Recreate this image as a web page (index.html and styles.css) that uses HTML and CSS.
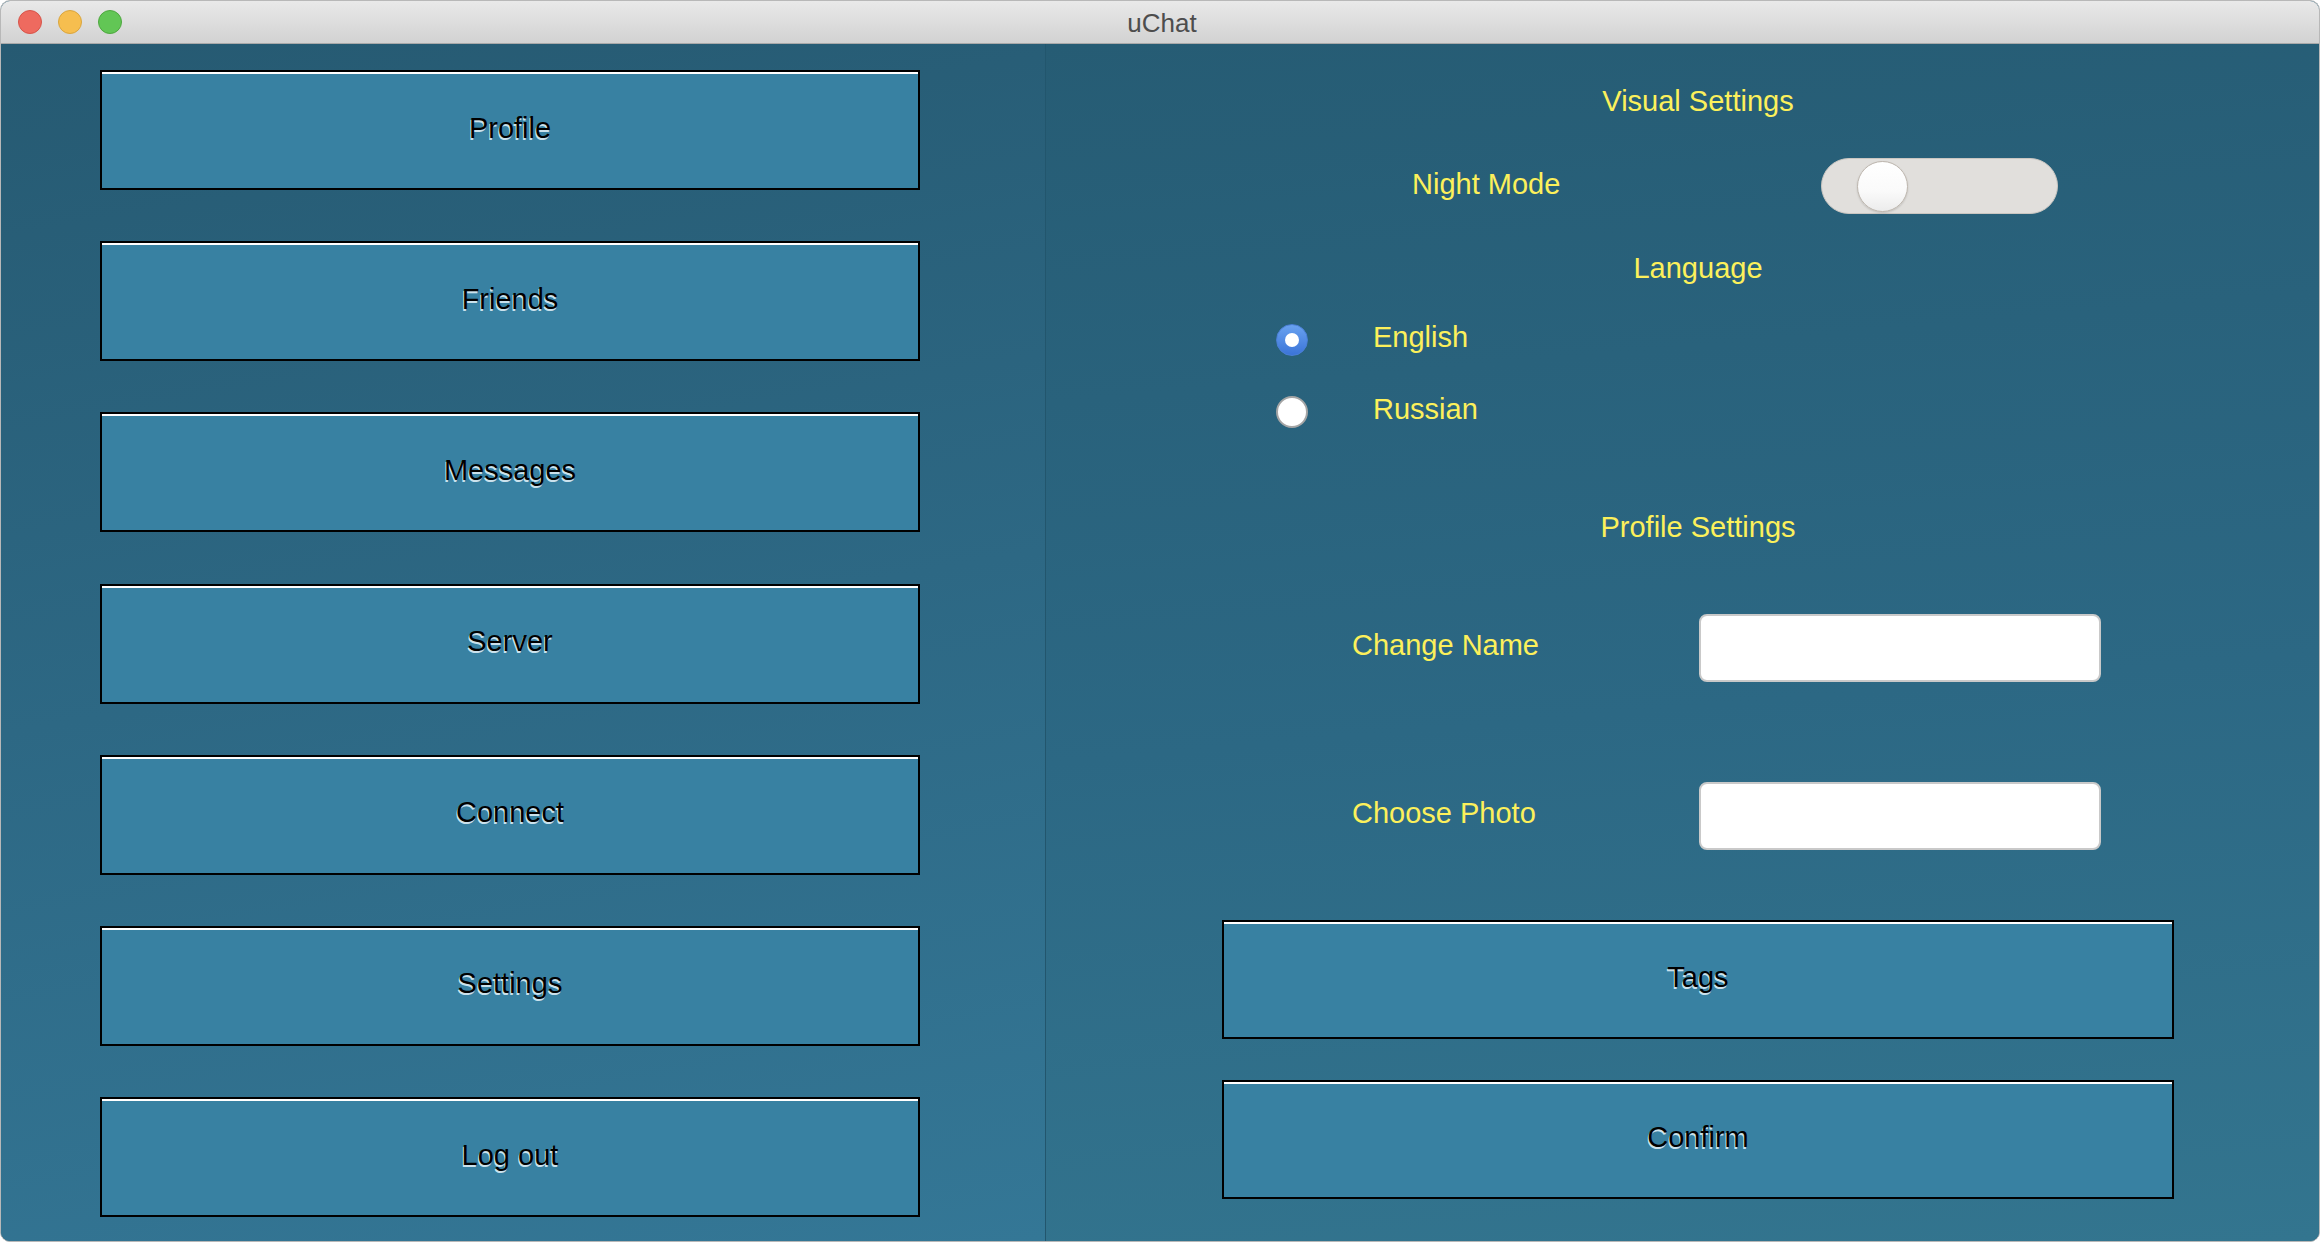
FILE: index.html
```html
<!DOCTYPE html>
<html lang="en">
<head>
<meta charset="utf-8">
<title>uChat</title>
<link rel="stylesheet" href="styles.css">
</head>
<body>
<div class="window">
  <div class="titlebar">
    <div class="lights">
      <span class="light red"></span>
      <span class="light yellow"></span>
      <span class="light green"></span>
    </div>
    <div class="title">uChat</div>
  </div>
  <div class="main">
    <nav class="sidebar">
      <button class="btn">Profile</button>
      <button class="btn">Friends</button>
      <button class="btn">Messages</button>
      <button class="btn">Server</button>
      <button class="btn">Connect</button>
      <button class="btn">Settings</button>
      <button class="btn">Log out</button>
    </nav>
    <section class="settings">
      <div class="heading h-visual">Visual Settings</div>
      <div class="row night-row">
        <span class="label night-label">Night Mode</span>
        <span class="toggle"><span class="knob"></span></span>
      </div>
      <div class="heading h-lang">Language</div>
      <div class="row radio-row r-en">
        <span class="radio checked"><span class="dot"></span></span>
        <span class="label radio-label">English</span>
      </div>
      <div class="row radio-row r-ru">
        <span class="radio"></span>
        <span class="label radio-label">Russian</span>
      </div>
      <div class="heading h-profile">Profile Settings</div>
      <div class="row field-row f-name">
        <span class="label field-label">Change Name</span>
        <span class="input"></span>
      </div>
      <div class="row field-row f-photo">
        <span class="label field-label">Choose Photo</span>
        <span class="input"></span>
      </div>
      <button class="btn wide b-tags">Tags</button>
      <button class="btn wide b-confirm">Confirm</button>
    </section>
  </div>
</div>
</body>
</html>
```
FILE: styles.css
```css
* { box-sizing: border-box; }
html, body {
  margin: 0;
  padding: 0;
  background: #ffffff;
}
body {
  width: 2320px;
  height: 1242px;
  overflow: hidden;
  font-family: "Liberation Sans", Arial, Helvetica, sans-serif;
}
.window {
  width: 2320px;
  height: 1242px;
  border-radius: 10px;
  overflow: hidden;
  border: 1px solid #b8b8b8;
  display: flex;
  flex-direction: column;
  background: #2b6680;
}
.titlebar {
  height: 43px;
  flex: none;
  position: relative;
  background: linear-gradient(to bottom, #e9e9e9, #d2d2d2);
  border-bottom: 1px solid #a9a9a9;
  display: flex;
  align-items: center;
  justify-content: center;
}
.lights {
  position: absolute;
  left: 17px;
  top: 9px;
  display: flex;
  gap: 16px;
}
.light {
  width: 24px;
  height: 24px;
  border-radius: 50%;
  display: block;
}
.red { background: #ee6a5f; border: 1px solid #d6544a; }
.yellow { background: #f6be4f; border: 1px solid #d9a53e; }
.green { background: #62c655; border: 1px solid #4ea73f; }
.title {
  font-size: 26px;
  color: #4d4d4d;
  margin-top: 2px;
  margin-left: 4px;
}
.main {
  flex: 1;
  display: flex;
  min-height: 0;
}
.sidebar {
  width: 1044px;
  flex: none;
  padding: 26px 0 0 99px;
  display: flex;
  flex-direction: column;
  gap: 51.2px;
  background: linear-gradient(170deg, #265a72 0%, #2d6884 50%, #347796 100%);
}
.btn {
  display: flex;
  align-items: center;
  justify-content: center;
  width: 820px;
  height: 120px;
  flex: none;
  margin: 0;
  padding: 0 0 4px 0;
  background: #3881a2;
  border: 2px solid #000000;
  box-shadow: inset 0 2px 0 #ffffff;
  font-family: "Liberation Sans", Arial, Helvetica, sans-serif;
  font-size: 29px;
  color: #000000;
  text-shadow: -1px 2px 0 rgba(225, 240, 248, 0.9);
}
.settings {
  flex: 1;
  border-left: 1px solid #22566d;
  padding: 39px 146px 0 176px;
  display: flex;
  flex-direction: column;
  background: linear-gradient(175deg, #265c74 0%, #2c6884 55%, #33758f 100%);
}
.heading {
  height: 34px;
  line-height: 34px;
  text-align: center;
  font-size: 29px;
  color: #fcf05b;
}
.h-visual { margin-top: 1px; }
.label {
  font-size: 29px;
  color: #fcf05b;
  line-height: 34px;
}
.row {
  display: flex;
  align-items: center;
}
.night-row {
  height: 56px;
  margin-top: 40px;
  padding-left: 190px;
}
.night-label {
  width: 409px;
  margin-top: -5px;
}
.toggle {
  width: 237px;
  height: 56px;
  border-radius: 28px;
  background: #e1dfdc;
  border: 1px solid #cac6c1;
  display: flex;
  align-items: center;
  padding-left: 35px;
}
.knob {
  width: 51px;
  height: 51px;
  border-radius: 50%;
  background: linear-gradient(to bottom, #ffffff 0%, #fafafa 60%, #ececec 100%);
  border: 1px solid #bdb6ae;
  box-shadow: 0 1px 2px rgba(0, 0, 0, 0.15);
}
.h-lang { margin-top: 37px; }
.radio-row {
  height: 40px;
  padding-left: 54px;
  gap: 65px;
}
.radio-label { padding-bottom: 6px; }
.r-en { margin-top: 35px; }
.r-ru { margin-top: 32px; }
.radio {
  width: 32px;
  height: 32px;
  border-radius: 50%;
  background: #ffffff;
  border: 2px solid #a5a5a5;
  display: flex;
  align-items: center;
  justify-content: center;
  flex: none;
}
.radio.checked {
  background: linear-gradient(to bottom, #69a2f0, #3b74d8);
  border: 1px solid #4a7fd6;
}
.dot {
  width: 14px;
  height: 14px;
  border-radius: 50%;
  background: #ffffff;
}
.h-profile { margin-top: 78px; }
.field-row {
  height: 68px;
  padding-left: 130px;
}
.f-name { margin-top: 70px; }
.f-photo { margin-top: 100px; }
.field-label {
  width: 347px;
  padding-bottom: 6px;
}
.input {
  width: 402px;
  height: 68px;
  background: #ffffff;
  border: 2px solid #c9c9c9;
  border-radius: 8px;
}
.btn.wide {
  width: 952px;
  height: 119px;
  align-self: flex-start;
}
.b-tags { margin-top: 70px; }
.b-confirm { margin-top: 41px; }
```
